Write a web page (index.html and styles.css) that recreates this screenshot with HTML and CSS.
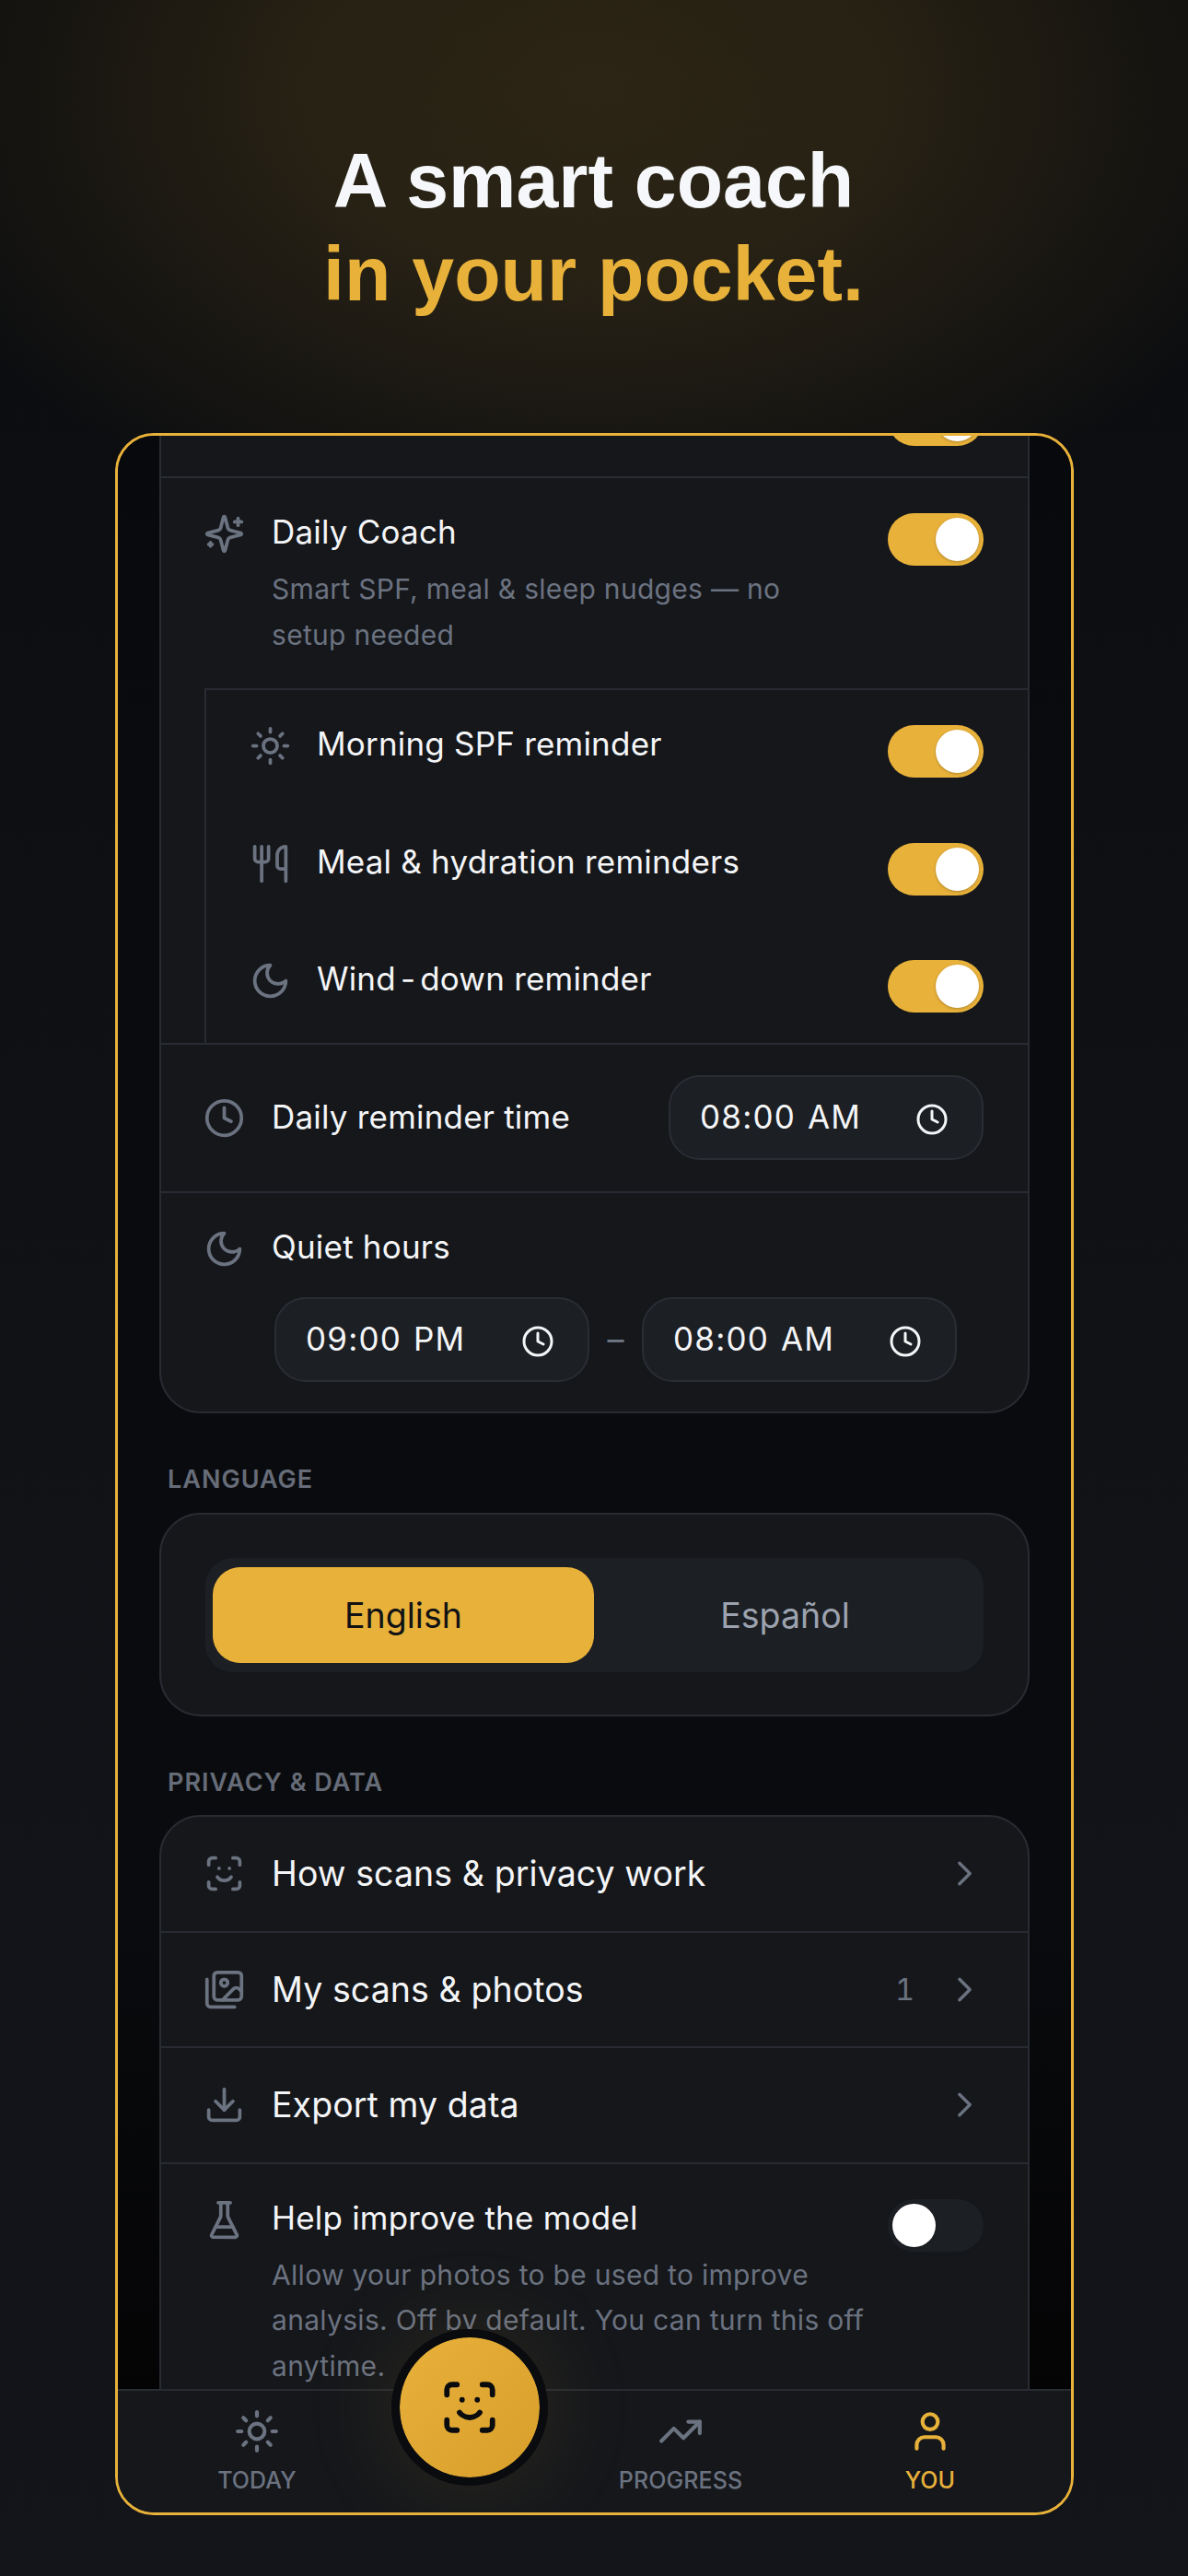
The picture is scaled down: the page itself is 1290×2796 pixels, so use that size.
FILE: index.html
```html
<!DOCTYPE html>
<html lang="en">
<head>
<meta charset="utf-8">
<title>A smart coach in your pocket</title>
<link rel="stylesheet" href="styles.css">
</head>
<body>
<svg class="sprite" xmlns="http://www.w3.org/2000/svg">
  <symbol id="i-sparkles" viewBox="0 0 24 24"><path d="M9.937 15.5A2 2 0 0 0 8.5 14.063l-6.135-1.582a.5.5 0 0 1 0-.962L8.5 9.936A2 2 0 0 0 9.937 8.5l1.582-6.135a.5.5 0 0 1 .963 0L14.063 8.5A2 2 0 0 0 15.5 9.937l6.135 1.581a.5.5 0 0 1 0 .964L15.5 14.063a2 2 0 0 0-1.437 1.437l-1.582 6.135a.5.5 0 0 1-.963 0z"/><path d="M20 3v4"/><path d="M22 5h-4"/><path d="M4 17v2"/><path d="M5 18H3"/></symbol>
  <symbol id="i-sun" viewBox="0 0 24 24"><circle cx="12" cy="12" r="4"/><path d="M12 2v2"/><path d="M12 20v2"/><path d="m4.93 4.93 1.41 1.41"/><path d="m17.66 17.66 1.41 1.41"/><path d="M2 12h2"/><path d="M20 12h2"/><path d="m6.34 17.66-1.41 1.41"/><path d="m19.07 4.93-1.41 1.41"/></symbol>
  <symbol id="i-utensils" viewBox="0 0 24 24"><path d="M3 2v7c0 1.1.9 2 2 2h4a2 2 0 0 0 2-2V2"/><path d="M7 2v20"/><path d="M21 15V2a5 5 0 0 0-5 5v6c0 1.1.9 2 2 2h3Zm0 0v7"/></symbol>
  <symbol id="i-moon" viewBox="0 0 24 24"><path d="M12 3a6 6 0 0 0 9 9 9 9 0 1 1-9-9Z"/></symbol>
  <symbol id="i-clock" viewBox="0 0 24 24"><circle cx="12" cy="12" r="10"/><polyline points="12 6 12 12 16 14"/></symbol>
  <symbol id="i-scan" viewBox="0 0 24 24"><path d="M3 7V5a2 2 0 0 1 2-2h2"/><path d="M17 3h2a2 2 0 0 1 2 2v2"/><path d="M21 17v2a2 2 0 0 1-2 2h-2"/><path d="M7 21H5a2 2 0 0 1-2-2v-2"/><path d="M8 14s1.5 2 4 2 4-2 4-2"/><path d="M9 9h.01"/><path d="M15 9h.01"/></symbol>
  <symbol id="i-images" viewBox="0 0 24 24"><path d="M18 22H4a2 2 0 0 1-2-2V6"/><path d="m22 13-1.296-1.296a2.41 2.41 0 0 0-3.408 0L11 18"/><circle cx="12" cy="8" r="2"/><rect width="16" height="16" x="6" y="2" rx="2"/></symbol>
  <symbol id="i-download" viewBox="0 0 24 24"><path d="M21 15v4a2 2 0 0 1-2 2H5a2 2 0 0 1-2-2v-4"/><polyline points="7 10 12 15 17 10"/><line x1="12" x2="12" y1="15" y2="3"/></symbol>
  <symbol id="i-flask" viewBox="0 0 24 24"><path d="M10 2v7.527a2 2 0 0 1-.211.896L4.72 20.55a1 1 0 0 0 .9 1.45h12.76a1 1 0 0 0 .9-1.45l-5.069-10.127A2 2 0 0 1 14 9.527V2"/><path d="M8.5 2h7"/><path d="M7 16h10"/></symbol>
  <symbol id="i-chevron" viewBox="0 0 24 24"><path d="m9 18 6-6-6-6"/></symbol>
  <symbol id="i-trend" viewBox="0 0 24 24"><polyline points="22 7 13.5 15.5 8.5 10.5 2 17"/><polyline points="16 7 22 7 22 13"/></symbol>
  <symbol id="i-user" viewBox="0 0 24 24"><path d="M19 21v-2a4 4 0 0 0-4-4H9a4 4 0 0 0-4 4v2"/><circle cx="12" cy="7" r="4"/></symbol>
</svg>

<main class="page">
  <header class="hero">
    <h1 class="hero-title">A smart coach<br><span class="hero-accent">in your pocket.</span></h1>
  </header>

  <section class="phone">
    <div class="viewport">
      <div class="card card-first">
        <div class="stub-row"><span class="toggle"><span class="knob"></span></span></div>

        <div class="row row-top">
          <svg class="icon"><use href="#i-sparkles"/></svg>
          <div class="row-body">
            <div class="row-title">Daily Coach</div>
            <p class="row-sub">Smart SPF, meal &amp; sleep nudges — no setup needed</p>
          </div>
          <span class="toggle"><span class="knob"></span></span>
        </div>

        <div class="subgroup">
          <div class="sub-row">
            <svg class="icon"><use href="#i-sun"/></svg>
            <div class="row-title row-body">Morning SPF reminder</div>
            <span class="toggle"><span class="knob"></span></span>
          </div>
          <div class="sub-row">
            <svg class="icon"><use href="#i-utensils"/></svg>
            <div class="row-title row-body">Meal &amp; hydration reminders</div>
            <span class="toggle"><span class="knob"></span></span>
          </div>
          <div class="sub-row">
            <svg class="icon"><use href="#i-moon"/></svg>
            <div class="row-title row-body">Wind<span class="hyphen">-</span>down reminder</div>
            <span class="toggle"><span class="knob"></span></span>
          </div>
        </div>

        <div class="row-time">
          <svg class="icon"><use href="#i-clock"/></svg>
          <div class="row-title row-body">Daily reminder time</div>
          <div class="time-pill"><span class="time-text">08:00 AM</span><svg class="time-icon"><use href="#i-clock"/></svg></div>
        </div>

        <div class="row-quiet">
          <div class="quiet-head">
            <svg class="icon"><use href="#i-moon"/></svg>
            <div class="row-title row-body">Quiet hours</div>
          </div>
          <div class="quiet-times">
            <div class="time-pill"><span class="time-text">09:00 PM</span><svg class="time-icon"><use href="#i-clock"/></svg></div>
            <span class="dash">–</span>
            <div class="time-pill"><span class="time-text">08:00 AM</span><svg class="time-icon"><use href="#i-clock"/></svg></div>
          </div>
        </div>
      </div>

      <h2 class="section-label">LANGUAGE</h2>
      <div class="card card-lang">
        <div class="segment">
          <div class="seg-item seg-active">English</div>
          <div class="seg-item">Español</div>
        </div>
      </div>

      <h2 class="section-label">PRIVACY &amp; DATA</h2>
      <div class="card">
        <div class="link-row">
          <svg class="icon"><use href="#i-scan"/></svg>
          <div class="link-title">How scans &amp; privacy work</div>
          <svg class="chevron"><use href="#i-chevron"/></svg>
        </div>
        <div class="link-row">
          <svg class="icon"><use href="#i-images"/></svg>
          <div class="link-title">My scans &amp; photos</div>
          <span class="count">1</span>
          <svg class="chevron"><use href="#i-chevron"/></svg>
        </div>
        <div class="link-row">
          <svg class="icon"><use href="#i-download"/></svg>
          <div class="link-title">Export my data</div>
          <svg class="chevron"><use href="#i-chevron"/></svg>
        </div>
        <div class="row row-help">
          <svg class="icon"><use href="#i-flask"/></svg>
          <div class="row-body">
            <div class="row-title">Help improve the model</div>
            <p class="row-sub row-sub-wide">Allow your photos to be used to improve analysis. Off by default. You can turn this off anytime.</p>
          </div>
          <span class="toggle toggle-off"><span class="knob"></span></span>
        </div>
      </div>
    </div>

    <nav class="nav">
      <div class="nav-item"><svg class="nav-icon"><use href="#i-sun"/></svg><span class="nav-label">TODAY</span></div>
      <div class="nav-spacer"></div>
      <div class="nav-item"><svg class="nav-icon"><use href="#i-trend"/></svg><span class="nav-label">PROGRESS</span></div>
      <div class="nav-item nav-active"><svg class="nav-icon"><use href="#i-user"/></svg><span class="nav-label">YOU</span></div>
      <div class="fab"><svg class="fab-icon"><use href="#i-scan"/></svg></div>
    </nav>
  </section>
</main>
</body>
</html>
```

FILE: styles.css
```css
* { box-sizing: border-box; }
html, body { margin: 0; padding: 0; }
body {
  width: 1290px;
  height: 2796px;
  overflow: hidden;
  background: #0b0c0f;
  font-family: "Inter", "Liberation Sans", sans-serif;
  color: #f4f5f7;
}
.sprite { display: none; }
svg { fill: none; stroke: currentColor; stroke-linecap: round; stroke-linejoin: round; flex: none; }

.page {
  width: 1290px;
  height: 2796px;
  padding-left: 125px;
  background:
    radial-gradient(ellipse 800px 520px at 645px 90px, rgba(232, 177, 58, 0.15) 0%, rgba(232, 177, 58, 0.125) 40%, rgba(232, 177, 58, 0) 100%),
    linear-gradient(180deg, #0b0c0e 0%, #101216 55%, #13151a 100%);
}
.hero { width: 1041px; padding-top: 146px; height: 345px; }
.hero-title {
  margin: 0 0 0 -2px;
  text-align: center;
  font-family: "Liberation Sans", Arial, sans-serif;
  font-weight: 700;
  font-size: 82.5px;
  line-height: 101px;
  color: #f5f7fa;
}
.hero-accent { color: #e8b13a; }

.phone {
  width: 1041px;
  height: 2260px;
  margin-top: 125px;
  border: 3px solid #e8b13a;
  border-radius: 42px;
  background: #0a0b0e;
  overflow: hidden;
  display: flex;
  flex-direction: column;
}
.viewport {
  flex: 1;
  min-height: 0;
  overflow: hidden;
  padding: 0 45px;
  background: linear-gradient(180deg, #08090c 0%, #0a0b0e 20%, #0a0b0e 75%, #040405 100%);
}

.card {
  background: #15171b;
  border: 2px solid #282b31;
  border-radius: 45px;
  overflow: hidden;
}
.card-first { margin-top: -108px; }

.stub-row {
  height: 152px;
  padding: 0 48px 33px 0;
  display: flex;
  align-items: flex-end;
  justify-content: flex-end;
  border-bottom: 2px solid #282b31;
}

.toggle {
  width: 104px;
  height: 57px;
  padding: 5px;
  border-radius: 29px;
  background: #e8b13a;
  display: flex;
  justify-content: flex-end;
  flex: none;
  margin-top: 3px;
}
.toggle-off { background: #1c1f24; justify-content: flex-start; }
.knob {
  width: 47px;
  height: 47px;
  border-radius: 50%;
  background: #ffffff;
  box-shadow: 0 1px 3px rgba(0, 0, 0, 0.25);
}

.icon {
  width: 45px;
  height: 45px;
  margin-top: 3px;
  color: #6b7280;
  stroke-width: 2;
}

.row { display: flex; align-items: flex-start; gap: 29px; padding: 35px 48px 0 46px; }
.row-top { height: 228px; }
.row-body { flex: 1; min-width: 0; }
.row-title { font-size: 35px; line-height: 46px; letter-spacing: 0.2px; color: #f4f5f7; }
.hyphen { margin: 0 5px; }
.row-sub {
  margin: 15px 0 0;
  font-size: 30px;
  line-height: 49.5px;
  letter-spacing: 0.3px;
  color: #6b7280;
  max-width: 600px;
}
.row-sub-wide { max-width: 670px; margin-right: -30px; }

.subgroup {
  margin-left: 47px;
  border-left: 2px solid #282b31;
  border-top: 2px solid #282b31;
}
.sub-row {
  height: 127.5px;
  display: flex;
  align-items: flex-start;
  gap: 28px;
  padding: 35px 48px 0 47px;
}

.row-time {
  height: 163.5px;
  display: flex;
  align-items: center;
  gap: 29px;
  padding: 0 48px 0 46px;
  border-top: 2px solid #282b31;
  border-bottom: 2px solid #282b31;
}
.row-time .icon { margin-top: 0; }
.row-time .row-title { padding-bottom: 3px; }

.row-quiet { padding: 35px 45px 32px 46px; }
.quiet-head { display: flex; align-items: flex-start; gap: 29px; }
.quiet-times {
  display: flex;
  align-items: center;
  margin: 30px 0 0 77px;
}
.time-pill {
  width: 342px;
  height: 92px;
  flex: none;
  padding: 0 36px 0 32px;
  background: #1c1f24;
  border: 2px solid #2a2d33;
  border-radius: 34px;
  display: flex;
  align-items: center;
  justify-content: space-between;
}
.time-text { font-size: 35px; line-height: 42px; padding-bottom: 3px; letter-spacing: 1.2px; word-spacing: 2px; color: #f4f5f7; }
.time-icon { width: 36px; height: 36px; stroke-width: 2; color: #f4f5f7; margin-top: 3px; }
.dash { width: 57px; text-align: center; font-size: 36px; color: #6b7280; }

.section-label {
  margin: 0;
  padding-left: 9px;
  font-size: 27px;
  line-height: 36px;
  font-weight: 600;
  letter-spacing: 1px;
  color: #666c78;
}
.card-first + .section-label { margin-top: 54px; margin-bottom: 18px; }
.card-lang + .section-label { margin-top: 54px; margin-bottom: 17px; }

.card-lang { padding: 47px 48px 46px 48px; }
.segment {
  height: 124px;
  padding: 10px 8px;
  display: flex;
  background: #1c1f24;
  border-radius: 30px;
}
.seg-item {
  width: 414px;
  flex: 1;
  border-radius: 30px;
  display: flex;
  align-items: center;
  justify-content: center;
  font-size: 37.5px;
  color: #9ca3af;
}
.seg-active { flex: none; background: #e8b13a; color: #111214; }

.link-row {
  height: 125.5px;
  display: flex;
  align-items: center;
  gap: 29px;
  padding: 0 46px 0 46px;
  border-bottom: 2px solid #282b31;
}
.link-row .icon { margin-top: 0; }
.link-title { flex: 1; font-size: 37.5px; letter-spacing: 0.08px; color: #f4f5f7; }
.count { font-size: 32.5px; font-variant-numeric: tabular-nums; color: #6b7280; margin-right: 3px; }
.chevron { width: 45px; height: 45px; color: #6b7280; stroke-width: 1.8; }
.row-help { padding-bottom: 60px; }

.nav {
  position: relative;
  height: 134px;
  flex: none;
  background: #15171b;
  border-top: 2px solid #282b31;
  display: grid;
  grid-template-columns: 302px 160px 298px 244px 31px;
  padding-top: 19px;
}
.nav-item { display: flex; flex-direction: column; align-items: center; color: #6b7280; }
.nav-icon { width: 50px; height: 50px; stroke-width: 2; }
.nav-label { margin-top: 13px; font-size: 25px; line-height: 30px; font-weight: 500; letter-spacing: 0.1px; }
.nav-active { color: #e8b13a; }
.fab {
  position: absolute;
  left: 297px;
  top: -67px;
  width: 170px;
  height: 170px;
  border: 9px solid #0a0b0e;
  border-radius: 50%;
  background: linear-gradient(135deg, #e8b13a, #d89e2b);
  background-clip: padding-box;
  box-shadow: 0 0 110px rgba(232, 177, 58, 0.12);
  display: flex;
  align-items: center;
  justify-content: center;
  color: #0a0b0e;
}
.fab-icon { width: 66px; height: 66px; stroke-width: 2.1; }
```
